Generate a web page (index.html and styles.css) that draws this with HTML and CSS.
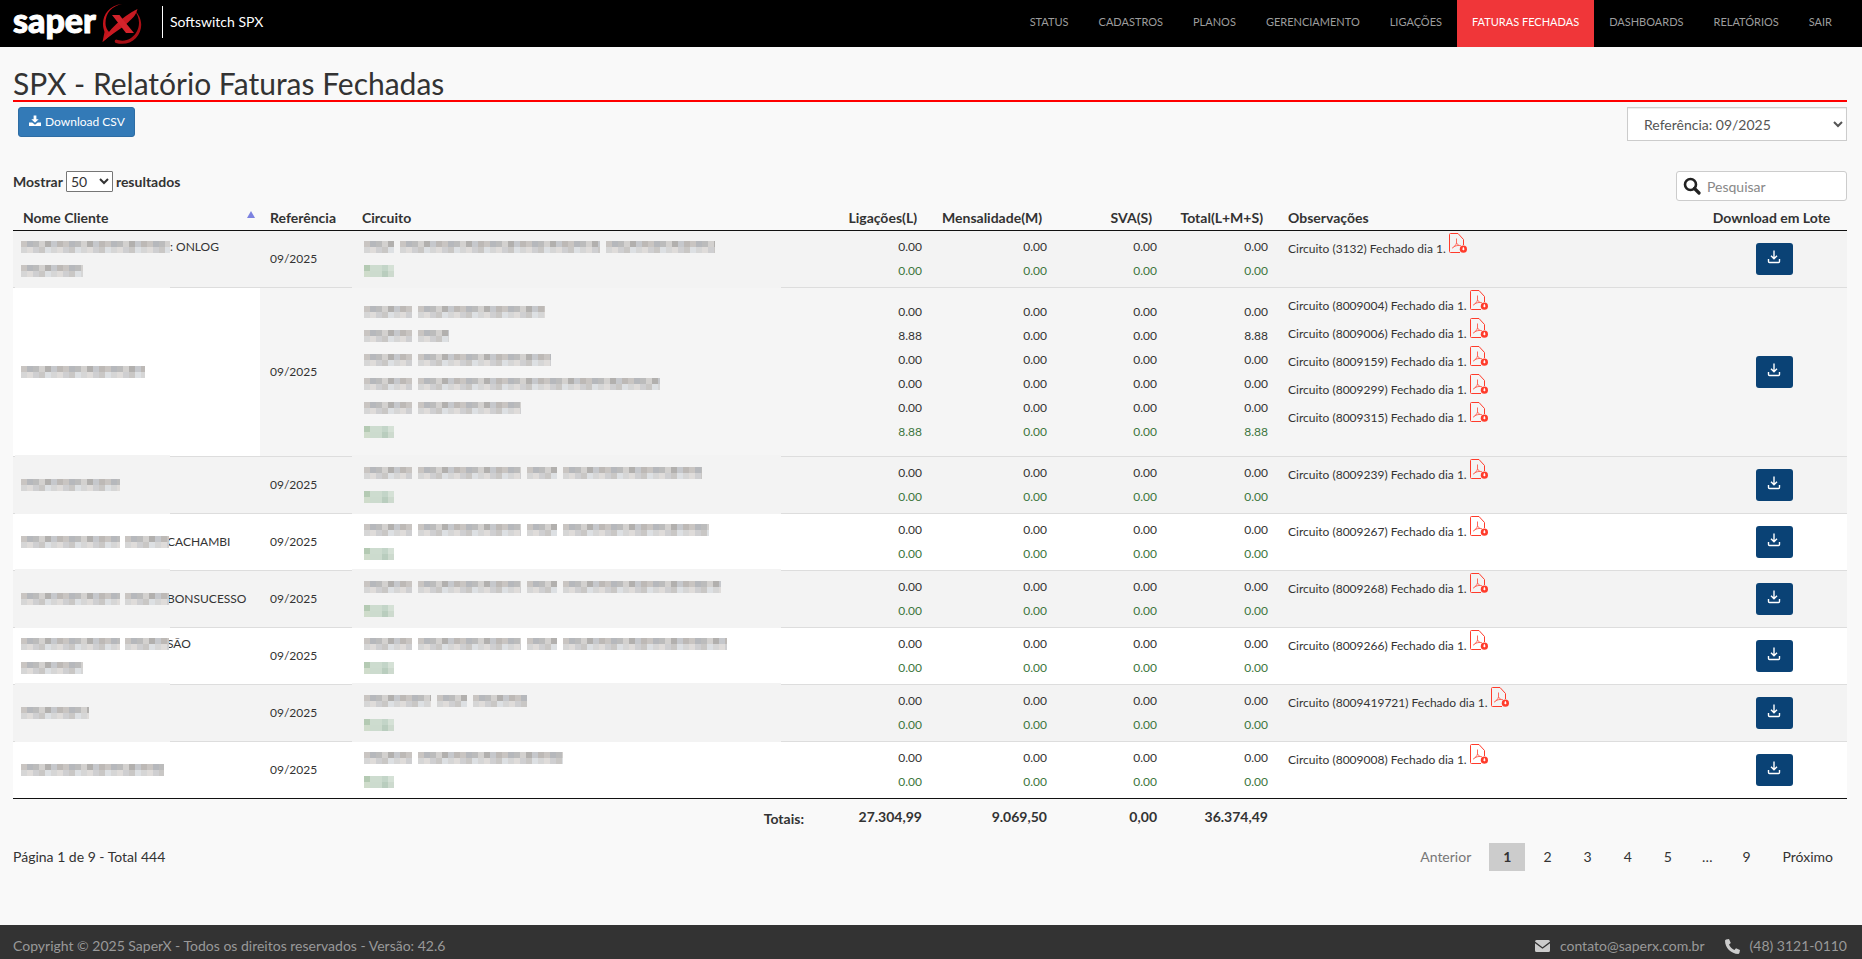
FILE: index.html
```html
<!DOCTYPE html>
<html lang="pt-BR">
<head>
    <meta charset="UTF-8">
    <meta name="viewport" content="width=device-width, initial-scale=1.0">
    <title>SPX - Relatório Faturas Fechadas</title>
    <link rel="stylesheet" href="styles.css">
</head>
<body>
    <!-- Shared icons -->
    <svg class="sprite" aria-hidden="true">
        <symbol id="pdf" viewBox="0 0 18 20">
            <path d="M11 19.5H1.5a1 1 0 0 1-1-1v-17a1 1 0 0 1 1-1H9l5.500 6V12" fill="none" stroke="#ff3b2b"/>
            <path d="M7.500 5.500v4.500M7.500 10c-.6 2-2 4-4.500 5.200M7.500 10c1 1.800 2.500 2.600 4.500 2.800M4.500 13.800c2-1 4-1.400 6-1.400" fill="none" stroke="#ff5a4c" stroke-width=".9"/>
            <circle cx="14.400" cy="16.200" r="3.600" fill="#ff3b2b"/>
            <path d="M13.800 14.200h1.200v1.600h1l-1.600 1.800-1.600-1.800h1z" fill="#fff"/>
        </symbol>
        <symbol id="lote" viewBox="0 0 14 14">
            <path d="M7 .5v8M4 5.800l3 3 3-3M1.500 9v2.500a1 1 0 0 0 1 1h9a1 1 0 0 0 1-1V9" fill="none" stroke="#fff" stroke-width="1.400"/>
        </symbol>
    </svg>

    <header class="navbar">
        <a class="logo" href="#">
            <span class="logo-text">saper</span>
            <svg class="logo-x" viewBox="0 0 42 42" aria-hidden="true">
                <path d="M22 2C10 3 3 12 3 22c0 3 .8 5.500 1.500 8L2.500 40 12 32c-3-1.500-6.500-5-6.500-11C5.500 11 12 4 22 2z" fill="#c4141b"/>
                <path d="M34 8c8 9 6 22-3 28-5 3.500-11 3-14.500 1.500-2 0-2.500 3-.5 3.500 7 2 15 .5 20-5C43.500 28 43 15 34 8z" fill="#a90f15"/>
                <path d="M2.500 40C8 29 21 15 37.500 7c-2 7-5 9-9 13l-5 4.500C17 29 9 34 2.500 40z" fill="#c81a22"/>
                <path d="M12 13h7.500l5 6.500L34 31h-8l-5-6.500z" fill="#d3232b"/>
            </svg>
        </a>
        <span class="product">Softswitch SPX</span>
        <nav class="menu">
            <a href="#">STATUS</a>
            <a href="#">CADASTROS</a>
            <a href="#">PLANOS</a>
            <a href="#">GERENCIAMENTO</a>
            <a href="#">LIGAÇÕES</a>
            <a href="#" class="active">FATURAS FECHADAS</a>
            <a href="#">DASHBOARDS</a>
            <a href="#">RELATÓRIOS</a>
            <a href="#">SAIR</a>
        </nav>
    </header>

    <main class="container">
        <h1>SPX - Relatório Faturas Fechadas</h1>

        <div class="actions">
            <button type="button" class="btn-csv">
                <svg width="12" height="12" viewBox="0 0 13 12" aria-hidden="true">
                    <path d="M5 0h3v4h2.500l-4 4-4-4H5z" fill="#fff"/>
                    <path d="M0 7.500h3.500L6.500 10l3-2.500H13V11.500H0z" fill="#fff"/>
                </svg>
                Download CSV
            </button>
            <select class="reference" aria-label="Referência">
                <option>Referência: 09/2025</option>
            </select>
        </div>

        <div class="filters">
            <label class="length">Mostrar
                <select>
                    <option>50</option>
                </select>
                resultados
            </label>
            <label class="search">
                <svg width="18" height="18" viewBox="0 0 18 18" aria-hidden="true">
                    <circle cx="7.500" cy="7.500" r="5.500" fill="none" stroke="#222" stroke-width="2.600"/>
                    <path d="M11.500 11.500l4.500 4.500" stroke="#222" stroke-width="3.200" stroke-linecap="round"/>
                </svg>
                <input type="search" placeholder="Pesquisar" aria-label="Pesquisar">
            </label>
        </div>

        <table class="invoices">
            <colgroup>
                <col class="c-name">
                <col class="c-ref">
                <col class="c-circuit">
                <col class="c-calls">
                <col class="c-fee">
                <col class="c-sva">
                <col class="c-sum">
                <col>
                <col class="c-lot">
            </colgroup>
            <thead>
                <tr>
                    <th class="sorted">Nome Cliente</th>
                    <th>Referência</th>
                    <th>Circuito</th>
                    <th class="num">Ligações(L)</th>
                    <th class="num">Mensalidade(M)</th>
                    <th class="num">SVA(S)</th>
                    <th class="num">Total(L+M+S)</th>
                    <th>Observações</th>
                    <th class="lot">Download em Lote</th>
                </tr>
            </thead>
            <tbody>
                <tr>
                    <td class="name"><div><i class="mask" style="width:149px"></i>: ONLOG</div><div><i class="mask" style="width:62px"></i></div></td>
                    <td>09/2025</td>
                    <td class="circuit">
                        <div><i class="mask" style="width:30px"></i><i class="mask" style="width:200px"></i><i class="mask" style="width:109px"></i></div>
                        <div><i class="mask green"></i></div>
                    </td>
                    <td class="num"><div>0.00</div><div class="sub">0.00</div></td>
                    <td class="num"><div>0.00</div><div class="sub">0.00</div></td>
                    <td class="num"><div>0.00</div><div class="sub">0.00</div></td>
                    <td class="num"><div>0.00</div><div class="sub">0.00</div></td>
                    <td class="notes">
                        <div>Circuito (3132) Fechado dia 1. <a href="#" aria-label="PDF"><svg><use href="#pdf"/></svg></a></div>
                    </td>
                    <td class="lot"><button type="button" aria-label="Download em lote"><svg><use href="#lote"/></svg></button></td>
                </tr>
                <tr class="hover">
                    <td class="name"><div><i class="mask" style="width:124px"></i></div></td>
                    <td>09/2025</td>
                    <td class="circuit">
                        <div><i class="mask code"></i><i class="mask" style="width:127px"></i></div>
                        <div><i class="mask code"></i><i class="mask" style="width:31px"></i></div>
                        <div><i class="mask code"></i><i class="mask" style="width:133px"></i></div>
                        <div><i class="mask code"></i><i class="mask" style="width:242px"></i></div>
                        <div><i class="mask code"></i><i class="mask" style="width:103px"></i></div>
                        <div><i class="mask green"></i></div>
                    </td>
                    <td class="num"><div>0.00</div><div>8.88</div><div>0.00</div><div>0.00</div><div>0.00</div><div class="sub">8.88</div></td>
                    <td class="num"><div>0.00</div><div>0.00</div><div>0.00</div><div>0.00</div><div>0.00</div><div class="sub">0.00</div></td>
                    <td class="num"><div>0.00</div><div>0.00</div><div>0.00</div><div>0.00</div><div>0.00</div><div class="sub">0.00</div></td>
                    <td class="num"><div>0.00</div><div>8.88</div><div>0.00</div><div>0.00</div><div>0.00</div><div class="sub">8.88</div></td>
                    <td class="notes">
                        <div>Circuito (8009004) Fechado dia 1. <a href="#" aria-label="PDF"><svg><use href="#pdf"/></svg></a></div>
                        <div>Circuito (8009006) Fechado dia 1. <a href="#" aria-label="PDF"><svg><use href="#pdf"/></svg></a></div>
                        <div>Circuito (8009159) Fechado dia 1. <a href="#" aria-label="PDF"><svg><use href="#pdf"/></svg></a></div>
                        <div>Circuito (8009299) Fechado dia 1. <a href="#" aria-label="PDF"><svg><use href="#pdf"/></svg></a></div>
                        <div>Circuito (8009315) Fechado dia 1. <a href="#" aria-label="PDF"><svg><use href="#pdf"/></svg></a></div>
                    </td>
                    <td class="lot"><button type="button" aria-label="Download em lote"><svg><use href="#lote"/></svg></button></td>
                </tr>
                <tr>
                    <td class="name"><div><i class="mask" style="width:99px"></i></div></td>
                    <td>09/2025</td>
                    <td class="circuit">
                        <div><i class="mask code"></i><i class="mask" style="width:103px"></i><i class="mask" style="width:30px"></i><i class="mask" style="width:139px"></i></div>
                        <div><i class="mask green"></i></div>
                    </td>
                    <td class="num"><div>0.00</div><div class="sub">0.00</div></td>
                    <td class="num"><div>0.00</div><div class="sub">0.00</div></td>
                    <td class="num"><div>0.00</div><div class="sub">0.00</div></td>
                    <td class="num"><div>0.00</div><div class="sub">0.00</div></td>
                    <td class="notes">
                        <div>Circuito (8009239) Fechado dia 1. <a href="#" aria-label="PDF"><svg><use href="#pdf"/></svg></a></div>
                    </td>
                    <td class="lot"><button type="button" aria-label="Download em lote"><svg><use href="#lote"/></svg></button></td>
                </tr>
                <tr>
                    <td class="name"><div><i class="mask" style="width:99px"></i><i class="mask cut" style="width:44px"></i>CACHAMBI</div></td>
                    <td>09/2025</td>
                    <td class="circuit">
                        <div><i class="mask code"></i><i class="mask" style="width:103px"></i><i class="mask" style="width:30px"></i><i class="mask" style="width:146px"></i></div>
                        <div><i class="mask green"></i></div>
                    </td>
                    <td class="num"><div>0.00</div><div class="sub">0.00</div></td>
                    <td class="num"><div>0.00</div><div class="sub">0.00</div></td>
                    <td class="num"><div>0.00</div><div class="sub">0.00</div></td>
                    <td class="num"><div>0.00</div><div class="sub">0.00</div></td>
                    <td class="notes">
                        <div>Circuito (8009267) Fechado dia 1. <a href="#" aria-label="PDF"><svg><use href="#pdf"/></svg></a></div>
                    </td>
                    <td class="lot"><button type="button" aria-label="Download em lote"><svg><use href="#lote"/></svg></button></td>
                </tr>
                <tr>
                    <td class="name"><div><i class="mask" style="width:99px"></i><i class="mask cut" style="width:44px"></i>BONSUCESSO</div></td>
                    <td>09/2025</td>
                    <td class="circuit">
                        <div><i class="mask code"></i><i class="mask" style="width:103px"></i><i class="mask" style="width:30px"></i><i class="mask" style="width:158px"></i></div>
                        <div><i class="mask green"></i></div>
                    </td>
                    <td class="num"><div>0.00</div><div class="sub">0.00</div></td>
                    <td class="num"><div>0.00</div><div class="sub">0.00</div></td>
                    <td class="num"><div>0.00</div><div class="sub">0.00</div></td>
                    <td class="num"><div>0.00</div><div class="sub">0.00</div></td>
                    <td class="notes">
                        <div>Circuito (8009268) Fechado dia 1. <a href="#" aria-label="PDF"><svg><use href="#pdf"/></svg></a></div>
                    </td>
                    <td class="lot"><button type="button" aria-label="Download em lote"><svg><use href="#lote"/></svg></button></td>
                </tr>
                <tr>
                    <td class="name"><div><i class="mask" style="width:99px"></i><i class="mask cut" style="width:44px"></i>SÃO</div><div><i class="mask" style="width:62px"></i></div></td>
                    <td>09/2025</td>
                    <td class="circuit">
                        <div><i class="mask code"></i><i class="mask" style="width:103px"></i><i class="mask" style="width:30px"></i><i class="mask" style="width:164px"></i></div>
                        <div><i class="mask green"></i></div>
                    </td>
                    <td class="num"><div>0.00</div><div class="sub">0.00</div></td>
                    <td class="num"><div>0.00</div><div class="sub">0.00</div></td>
                    <td class="num"><div>0.00</div><div class="sub">0.00</div></td>
                    <td class="num"><div>0.00</div><div class="sub">0.00</div></td>
                    <td class="notes">
                        <div>Circuito (8009266) Fechado dia 1. <a href="#" aria-label="PDF"><svg><use href="#pdf"/></svg></a></div>
                    </td>
                    <td class="lot"><button type="button" aria-label="Download em lote"><svg><use href="#lote"/></svg></button></td>
                </tr>
                <tr>
                    <td class="name"><div><i class="mask" style="width:68px"></i></div></td>
                    <td>09/2025</td>
                    <td class="circuit">
                        <div><i class="mask" style="width:67px"></i><i class="mask" style="width:30px"></i><i class="mask" style="width:54px"></i></div>
                        <div><i class="mask green"></i></div>
                    </td>
                    <td class="num"><div>0.00</div><div class="sub">0.00</div></td>
                    <td class="num"><div>0.00</div><div class="sub">0.00</div></td>
                    <td class="num"><div>0.00</div><div class="sub">0.00</div></td>
                    <td class="num"><div>0.00</div><div class="sub">0.00</div></td>
                    <td class="notes">
                        <div>Circuito (8009419721) Fechado dia 1. <a href="#" aria-label="PDF"><svg><use href="#pdf"/></svg></a></div>
                    </td>
                    <td class="lot"><button type="button" aria-label="Download em lote"><svg><use href="#lote"/></svg></button></td>
                </tr>
                <tr>
                    <td class="name"><div><i class="mask" style="width:143px"></i></div></td>
                    <td>09/2025</td>
                    <td class="circuit">
                        <div><i class="mask code"></i><i class="mask" style="width:145px"></i></div>
                        <div><i class="mask green"></i></div>
                    </td>
                    <td class="num"><div>0.00</div><div class="sub">0.00</div></td>
                    <td class="num"><div>0.00</div><div class="sub">0.00</div></td>
                    <td class="num"><div>0.00</div><div class="sub">0.00</div></td>
                    <td class="num"><div>0.00</div><div class="sub">0.00</div></td>
                    <td class="notes">
                        <div>Circuito (8009008) Fechado dia 1. <a href="#" aria-label="PDF"><svg><use href="#pdf"/></svg></a></div>
                    </td>
                    <td class="lot"><button type="button" aria-label="Download em lote"><svg><use href="#lote"/></svg></button></td>
                </tr>
            </tbody>
            <tfoot>
                <tr>
                    <th class="totals" colspan="3">Totais:</th>
                    <td class="num">27.304,99</td>
                    <td class="num">9.069,50</td>
                    <td class="num">0,00</td>
                    <td class="num">36.374,49</td>
                    <td></td>
                    <td></td>
                </tr>
            </tfoot>
        </table>

        <div class="table-footer">
            <span>Página 1 de 9 - Total 444</span>
            <nav class="pages" aria-label="Paginação">
                <a class="disabled">Anterior</a>
                <a href="#" class="current">1</a>
                <a href="#">2</a>
                <a href="#">3</a>
                <a href="#">4</a>
                <a href="#">5</a>
                <span>…</span>
                <a href="#">9</a>
                <a href="#">Próximo</a>
            </nav>
        </div>
    </main>

    <footer class="footer">
        <span>Copyright © 2025 SaperX - Todos os direitos reservados - Versão: 42.6</span>
        <div class="contacts">
            <a href="#">
                <svg width="15" height="12" viewBox="0 0 15 12" aria-hidden="true">
                    <path d="M1.500 0h12A1.500 1.500 0 0 1 15 1.500L7.500 7.200 0 1.500A1.500 1.500 0 0 1 1.500 0zM0 3.200l7.500 5.600L15 3.200v7.300a1.500 1.500 0 0 1-1.500 1.500h-12A1.500 1.500 0 0 1 0 10.500z" fill="#ccc"/>
                </svg>
                contato@saperx.com.br
            </a>
            <a href="#">
                <svg width="15" height="15" viewBox="0 0 15 15" aria-hidden="true">
                    <path d="M1 .6L4 0l1.800 4L4 5.600C5 8 7 10 9.400 11L11 9.200l4 1.800-.6 3-1 1C6 15 0 9 0 1.600z" fill="#ccc"/>
                </svg>
                (48) 3121-0110
            </a>
        </div>
    </footer>
</body>
</html>
```

FILE: styles.css
```css
* {
    box-sizing: border-box;
}
body {
    margin: 0;
    min-height: 100vh;
    display: flex;
    flex-direction: column;
    font-family: Lato, "Liberation Sans", sans-serif;
    font-size: 14px;
    line-height: 20px;
    color: #333;
    background-color: #f9f9f9;
}
a {
    color: inherit;
    text-decoration: none;
}
select, input, button {
    font-family: inherit;
}
.sprite {
    position: absolute;
    width: 0;
    height: 0;
}

/* Top bar */
.navbar {
    display: flex;
    align-items: center;
    height: 47px;
    padding: 0 15px 0 13px;
    background: #000;
    color: #fff;
}
.logo {
    display: flex;
    align-items: center;
    gap: 4px;
    width: 149px;
    padding-bottom: 2px;
}
.logo-text {
    padding-bottom: 6px;
    font-size: 34px;
    font-weight: 900;
    line-height: 36px;
    -webkit-text-stroke: 1px #fff;
}
.logo-x {
    width: 42px;
    height: 42px;
}
.product {
    padding: 6px 0 6px 7px;
    border-left: 1px solid #fff;
    margin-bottom: 3px;
}
.menu {
    display: flex;
    margin-left: auto;
}
.menu a {
    padding: 12px 15px 15px;
    font-size: 11px;
    color: #9d9d9d;
}
.menu a.active {
    background: #f03639;
    color: #fff;
}

/* Title and actions */
.container {
    flex: 1;
    padding: 0 15px 0 13px;
}
h1 {
    margin: 19px 0 5px;
    font-size: 30px;
    font-weight: 400;
    line-height: 34px;
    border-bottom: 2px solid #f00;
}
.actions {
    display: flex;
    justify-content: space-between;
    align-items: flex-start;
    padding-left: 5px;
    margin-bottom: 30px;
}
.btn-csv {
    display: flex;
    align-items: center;
    gap: 4px;
    height: 30px;
    padding: 0 9px 2px 10px;
    font-size: 12px;
    color: #fff;
    background: #337ab7;
    border: 1px solid #2e6da4;
    border-radius: 3px;
}
.reference {
    width: 220px;
    height: 34px;
    padding: 6px 12px;
    font-size: 14px;
    color: #555;
    background-color: #fff;
    border: 1px solid #ccc;
    box-shadow: inset 0 1px 1px rgba(0, 0, 0, 0.075);
}
.filters {
    display: flex;
    justify-content: space-between;
    align-items: flex-start;
    height: 34px;
}
.length {
    display: flex;
    align-items: center;
    gap: 3px;
    font-weight: bold;
}
.length select {
    width: 47px;
    height: 21px;
    padding: 0;
    font-size: 14px;
    color: #333;
    background: #fff;
    border: 1px solid #767676;
    border-radius: 1px;
}
.search {
    display: flex;
    align-items: center;
    gap: 4px;
    width: 171px;
    height: 30px;
    padding: 0 6px;
    background: #fff;
    border: 1px solid #ccc;
    border-radius: 3px;
}
.search input {
    min-width: 0;
    flex: 1;
    padding: 1px 2px;
    font-size: 14px;
    border: 0;
    background: none;
}
.search input::placeholder {
    color: #888;
}

/* Invoices table */
.invoices {
    width: 100%;
    table-layout: fixed;
    border-collapse: separate;
    border-spacing: 0;
}
.c-name { width: 247px; }
.c-ref { width: 92px; }
.c-circuit { width: 462px; }
.c-calls { width: 118px; }
.c-fee { width: 125px; }
.c-sva { width: 110px; }
.c-sum { width: 111px; }
.c-lot { width: 146px; }
.invoices th {
    text-align: left;
}
.invoices thead th {
    padding: 3px 10px 2px;
    border-bottom: 1px solid #111;
    white-space: nowrap;
}
.invoices thead th.num, .invoices thead th.lot {
    padding-right: 15px;
}
.invoices .num {
    text-align: right;
}
.invoices .lot {
    text-align: center;
}
.sorted {
    position: relative;
}
.sorted::after {
    content: "";
    position: absolute;
    top: 6px;
    right: 5px;
    border: 4px solid transparent;
    border-top: 0;
    border-bottom: 7px solid #7c82e0;
}
.invoices tbody td {
    padding: 4px 10px;
    font-size: 12px;
    line-height: 24px;
    vertical-align: middle;
    background: #fff;
    border-bottom: 1px solid #ddd;
}
.invoices tbody tr:nth-child(odd) td {
    background: #f3f3f3;
}
.invoices tbody tr.hover td {
    background: #f5f5f5;
}
.invoices tbody tr.hover td.name {
    background: #fff;
}
.invoices tbody tr:last-child td {
    border-bottom-color: #111;
}
.sub {
    color: #3c763d;
}
.invoices tbody td.name {
    position: relative;
    padding-left: 8px;
}
.invoices tbody td.circuit {
    position: relative;
    padding-left: 12px;
}
.name div, .circuit div {
    display: flex;
    align-items: center;
    gap: 6px;
    height: 24px;
}
.name div {
    gap: 5px;
}
.name div:has(.mask:only-child) {
    gap: 0;
}

/* Hidden customer data, shown as blocks */
.mask {
    height: 12px;
    background:
        repeating-linear-gradient(90deg, #c9c5c2 0 6px, #b6b8bc 6px 12px, #bcbcbc 12px 18px, #d3d1cf 18px 24px, #b2b0ae 24px 30px, #c6c8cc 30px 36px, #bdb9b6 36px 42px) 0 0 / 100% 6px no-repeat,
        repeating-linear-gradient(90deg, #d6d6d6 0 6px, #dfdcda 6px 12px, #cfcfd1 12px 18px, #c9c7c5 18px 24px, #dde0e3 24px 30px) 0 6px / 100% 6px no-repeat;
}
.mask.code {
    width: 48px;
}
.mask.green {
    width: 30px;
    background:
        linear-gradient(90deg, #b4cab3 0 6px, #cddccf 6px 18px, #c3d5c8 18px 24px, #d5e1d6 24px) 0 0 / 100% 6px no-repeat,
        linear-gradient(90deg, #cfdccb 0 6px, #ccdbce 6px 18px, #b9cdbe 18px 24px, #cddace 24px) 0 6px / 100% 6px no-repeat;
}
.mask.cut {
    margin-right: -7px;
    z-index: 1;
}
.name::after, .circuit::after {
    content: "";
    position: absolute;
    left: 2px;
    bottom: -5px;
    width: 155px;
    height: 6px;
    background: #f3f3f3;
}
.circuit::after {
    left: 0;
    width: 429px;
}
tr:last-child .name::after, tr:last-child .circuit::after {
    display: none;
}

.invoices tbody td.notes {
    padding: 0 10px 28px;
}
.notes div {
    display: flex;
    align-items: baseline;
    gap: 3px;
    height: 28px;
    padding-top: 2px;
    line-height: 20px;
}
.notes svg {
    width: 18px;
    height: 20px;
    vertical-align: baseline;
}
.lot button {
    display: block;
    width: 37px;
    height: 32px;
    margin: 0 auto;
    padding: 0 0 6px;
    background: #0a4275;
    border: 0;
    border-radius: 3px;
}
.lot svg {
    width: 14px;
    height: 14px;
    vertical-align: middle;
}
.invoices tfoot th, .invoices tfoot td {
    padding: 8px 10px 6px;
    font-weight: bold;
}
.invoices tfoot .totals {
    padding: 10px 10px 4px;
    text-align: right;
}

/* Pagination */
.table-footer {
    display: flex;
    justify-content: space-between;
    align-items: center;
    margin: 10px 0 54px;
}
.pages {
    display: flex;
    gap: 4px;
}
.pages a, .pages span {
    padding: 4px 14px;
}
.pages span {
    padding: 4px 12px;
}
.pages .current {
    font-weight: bold;
    background: #ccc;
}
.pages .disabled {
    color: #777;
}

/* Footer */
.footer {
    display: flex;
    justify-content: space-between;
    padding: 11px 15px 3px 13px;
    background: #333;
    color: #999;
}
.contacts {
    display: flex;
    gap: 20px;
}
.contacts a {
    display: flex;
    align-items: center;
    gap: 10px;
}
```
